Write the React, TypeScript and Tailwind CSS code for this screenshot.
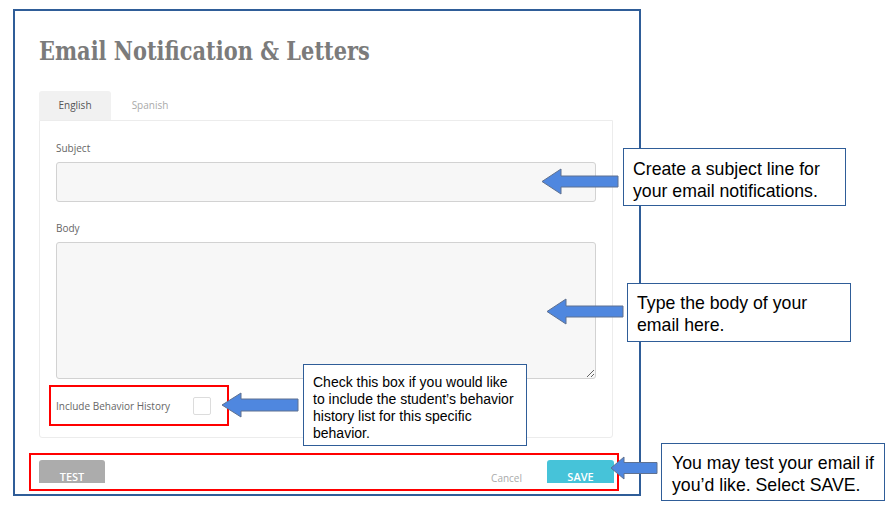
import React from 'react';

function Arrow({ w, h, head, shaft }: { w: number; h: number; head: number; shaft: number }) {
  const mid = h / 2;
  const t = mid - shaft / 2;
  const b = mid + shaft / 2;
  const pts = `1,${mid} ${head},1 ${head},${t} ${w - 1},${t} ${w - 1},${b} ${head},${b} ${head},${h - 1}`;
  return (
    <svg width={w} height={h} viewBox={`0 0 ${w} ${h}`} className="shrink-0">
      <polygon points={pts} fill="#4f87df" stroke="#5f7190" strokeWidth="1" />
    </svg>
  );
}

const note = "border border-[#2f5d98] bg-white text-black font-['Liberation_Sans',sans-serif]";

export default function App() {
  return (
    <div className="relative w-[895px] h-[508px] bg-white overflow-hidden pl-[13px] pt-[9px] font-['Open_Sans',sans-serif]">
      {/* the app window */}
      <div className="w-[628px] h-[487px] border-2 border-[#2f5d98] pl-[24px] pt-[24px]">
        <h1 className="origin-left scale-x-[0.805] whitespace-nowrap text-[26px] leading-[32px] font-bold text-[#7b7b7b] font-['DejaVu_Serif',serif]">
          Email Notification &amp; Letters
        </h1>

        <div className="mt-[24px] flex text-[10px]">
          <div className="w-[72px] h-[29px] bg-[#f1f1f1] rounded-t-[3px] flex items-center justify-center text-[#555]">
            English
          </div>
          <div className="w-[78px] h-[29px] flex items-center justify-center text-[#aaa]">Spanish</div>
        </div>

        <div className="w-[574px] h-[318px] border border-[#ececec] rounded-b-[3px] px-[16px] pt-[20px]">
          <div className="text-[10px] leading-[14px] text-[#666]">Subject</div>
          <input
            readOnly
            className="mt-[7px] block w-full h-[40px] bg-[#f7f7f7] border border-[#d2d2d2] rounded-[3px] outline-none"
          />
          <div className="mt-[19px] text-[10px] leading-[14px] text-[#666]">Body</div>
          <textarea
            readOnly
            className="mt-[7px] block w-full h-[137px] bg-[#f7f7f7] border border-[#d2d2d2] rounded-[3px] outline-none"
          />
          <div className="mt-[6px] -ml-[7px] w-[180px] h-[41px] border-2 border-[#ff0000] pl-[5px] flex items-center">
            <span className="w-[137px] text-[10px] leading-[14px] text-[#666]">Include Behavior History</span>
            <div className="w-[18px] h-[18px] border border-[#dcdcdc] rounded-[2px] bg-white" />
          </div>
        </div>

        <div className="mt-[15px] -ml-[10px] w-[590px] h-[38px] border-2 border-[#ff0000] pt-[5px] pl-[8px] pr-[3px] flex items-start">
          <div className="w-[66px] h-[23px] bg-[#acacac] rounded-t-[3px] pt-[11px] text-center text-[11px] leading-[12px] font-semibold text-white">
            TEST
          </div>
          <div className="flex-1" />
          <div className="pt-[12px] text-[10px] leading-[12px] text-[#aaa] mr-[25px]">Cancel</div>
          <div className="w-[67px] h-[23px] bg-[#46c3d9] rounded-t-[3px] pt-[11px] text-center text-[11px] leading-[12px] font-semibold text-white">
            SAVE
          </div>
        </div>
      </div>

      {/* callouts laid over the screenshot */}
      <div className="absolute left-[221px] top-[364px] flex items-start gap-[4px]">
        <div className="mt-[28px]">
          <Arrow w={78} h={26} head={20} shaft={12} />
        </div>
        <div className={`${note} w-[224px] h-[82px] pl-[9px] pt-[9px] text-[14px] leading-[17px]`}>
          Check this box if you would like
          <br />
          to include the student’s behavior
          <br />
          history list for this specific
          <br />
          behavior.
        </div>
      </div>

      <div className="absolute left-[541px] top-[148px] flex items-start gap-[4px]">
        <div className="mt-[20px]">
          <Arrow w={78} h={27} head={20} shaft={11} />
        </div>
        <div className={`${note} w-[223px] h-[58px] pl-[9px] pt-[9px] text-[17.7px] leading-[22px]`}>
          Create a subject line for
          <br />
          your email notifications.
        </div>
      </div>

      <div className="absolute left-[546px] top-[283px] flex items-start gap-[3px]">
        <div className="mt-[15px]">
          <Arrow w={78} h={27} head={20} shaft={11} />
        </div>
        <div className={`${note} w-[224px] h-[59px] pl-[9px] pt-[8px] text-[17.7px] leading-[22px]`}>
          Type the body of your
          <br />
          email here.
        </div>
      </div>

      <div className="absolute left-[610px] top-[443px] flex items-start gap-[3px]">
        <div className="mt-[13px]">
          <Arrow w={48} h={24} head={14} shaft={11} />
        </div>
        <div className={`${note} w-[224px] h-[58px] pl-[10px] pt-[8px] text-[17.7px] leading-[22px]`}>
          You may test your email if
          <br />
          you’d like. Select SAVE.
        </div>
      </div>
    </div>
  );
}
